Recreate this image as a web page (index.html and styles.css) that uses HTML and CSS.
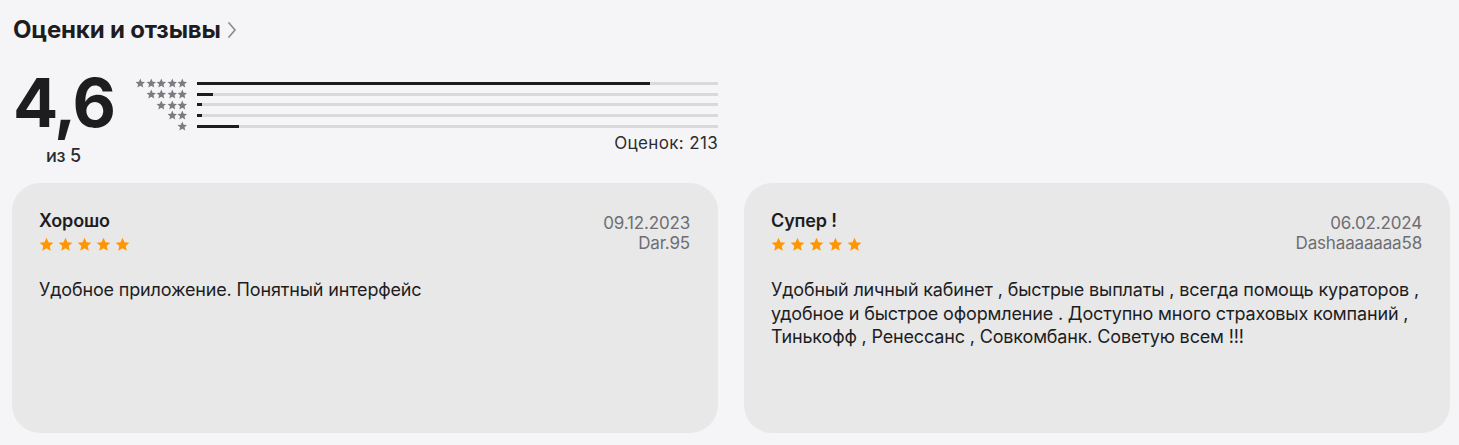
FILE: index.html
```html
<!DOCTYPE html>
<html lang="ru">
<head>
<meta charset="utf-8">
<title>Оценки и отзывы</title>
<link rel="stylesheet" href="styles.css">
</head>
<body>
<svg class="defs" width="0" height="0" aria-hidden="true">
  <defs>
    <symbol id="star" viewBox="0 0 24 24">
      <path d="M12 1.2l3.2 7.1 7.7.8-5.8 5.2 1.7 7.6L12 17.9l-6.8 4 1.7-7.6-5.8-5.2 7.7-.8z"/>
    </symbol>
  </defs>
</svg>
<main class="page">
  <h2 class="section-title">Оценки и отзывы <svg class="chev" viewBox="0 0 10 18"><path d="M2 2l6 7-6 7"/></svg></h2>

  <section class="summary">
    <div class="score">
      <div class="score-value">4,6</div>
      <div class="score-of">из 5</div>
    </div>
    <div class="histogram">
      <div class="hrow">
        <div class="hstars"><svg><use href="#star"/></svg><svg><use href="#star"/></svg><svg><use href="#star"/></svg><svg><use href="#star"/></svg><svg><use href="#star"/></svg></div>
        <div class="track"><div class="fill" style="width:87%"></div></div>
      </div>
      <div class="hrow">
        <div class="hstars"><svg><use href="#star"/></svg><svg><use href="#star"/></svg><svg><use href="#star"/></svg><svg><use href="#star"/></svg></div>
        <div class="track"><div class="fill" style="width:3%"></div></div>
      </div>
      <div class="hrow">
        <div class="hstars"><svg><use href="#star"/></svg><svg><use href="#star"/></svg><svg><use href="#star"/></svg></div>
        <div class="track"><div class="fill" style="width:1%"></div></div>
      </div>
      <div class="hrow">
        <div class="hstars"><svg><use href="#star"/></svg><svg><use href="#star"/></svg></div>
        <div class="track"><div class="fill" style="width:1%"></div></div>
      </div>
      <div class="hrow">
        <div class="hstars"><svg><use href="#star"/></svg></div>
        <div class="track"><div class="fill" style="width:8%"></div></div>
      </div>
      <div class="count">Оценок: 213</div>
    </div>
  </section>

  <section class="reviews">
    <article class="card">
      <div class="card-head">
        <div>
          <h3 class="card-title">Хорошо</h3>
          <div class="stars"><svg><use href="#star"/></svg><svg><use href="#star"/></svg><svg><use href="#star"/></svg><svg><use href="#star"/></svg><svg><use href="#star"/></svg></div>
        </div>
        <div class="meta">
          <div>09.12.2023</div>
          <div>Dar.95</div>
        </div>
      </div>
      <p class="card-body">Удобное приложение. Понятный интерфейс</p>
    </article>
    <article class="card">
      <div class="card-head">
        <div>
          <h3 class="card-title">Супер !</h3>
          <div class="stars"><svg><use href="#star"/></svg><svg><use href="#star"/></svg><svg><use href="#star"/></svg><svg><use href="#star"/></svg><svg><use href="#star"/></svg></div>
        </div>
        <div class="meta">
          <div>06.02.2024</div>
          <div>Dashaaaaaaa58</div>
        </div>
      </div>
      <p class="card-body">Удобный личный кабинет , быстрые выплаты , всегда помощь кураторов , удобное и быстрое оформление . Доступно много страховых компаний , Тинькофф , Ренессанс , Совкомбанк. Советую всем !!!</p>
    </article>
  </section>
</main>
</body>
</html>
```

FILE: styles.css
```css
* { box-sizing: border-box; }
html, body { margin: 0; }
body {
  background: #f5f5f7;
  color: #1d1d1f;
  font-family: Inter, "Liberation Sans", sans-serif;
  letter-spacing: -0.01em;
}
.defs { position: absolute; }
.page { padding: 16px 9px 0 12px; }

.section-title {
  margin: 0 0 0 1px;
  font-size: 24px;
  line-height: 28px;
  font-weight: 700;
  display: flex;
  align-items: center;
  gap: 6px;
}
.chev { width: 10px; height: 18px; fill: none; stroke: #8e8e93; stroke-width: 1.8; stroke-linecap: round; stroke-linejoin: round; }

.summary {
  display: flex;
  align-items: flex-start;
  margin-top: 23px;
}
.score {
  width: 103px;
  display: flex;
  flex-direction: column;
  align-items: center;
}
.score-value {
  font-size: 67px;
  font-weight: 700;
  line-height: 72px;
  letter-spacing: -0.03em;
}
.score-of {
  font-size: 18px;
  font-weight: 500;
  line-height: 20px;
  color: #2c2c2e;
  margin-top: 7px;
}
.histogram {
  width: 583px;
  margin-left: 20px;
  padding-top: 11px;
}
.hrow {
  display: flex;
  align-items: center;
  height: 10.75px;
}
.hstars {
  width: 53px;
  display: flex;
  justify-content: flex-end;
  fill: #7c7c80;
}
.hstars svg { width: 10.6px; height: 10.5px; }
.track {
  flex: 1;
  margin-left: 9px;
  height: 3px;
  background: #d9d9dc;
}
.fill { height: 3px; background: #1d1d1f; }
.count {
  text-align: right;
  font-size: 17px;
  line-height: 20px;
  letter-spacing: 0.02em;
  color: #2c2c2e;
  margin-top: 1px;
}

.reviews {
  display: grid;
  grid-template-columns: 1fr 1fr;
  gap: 26px;
  margin-top: 17px;
}
.card {
  height: 250px;
  background: #e8e8e8;
  border-radius: 28px;
  padding: 27px 28px 20px 27px;
}
.card-head {
  display: flex;
  justify-content: space-between;
  align-items: flex-start;
}
.card-title {
  margin: 0;
  font-size: 18px;
  font-weight: 600;
  line-height: 22px;
}
.stars {
  display: flex;
  gap: 4px;
  fill: #ff9500;
  margin-top: 5px;
}
.stars svg { width: 15px; height: 15px; }
.meta {
  margin-top: 3px;
  text-align: right;
  font-size: 17px;
  line-height: 20px;
  color: #6e6e73;
}
.card-body {
  margin: 25px 0 0;
  font-size: 18px;
  line-height: 23.5px;
}
```
